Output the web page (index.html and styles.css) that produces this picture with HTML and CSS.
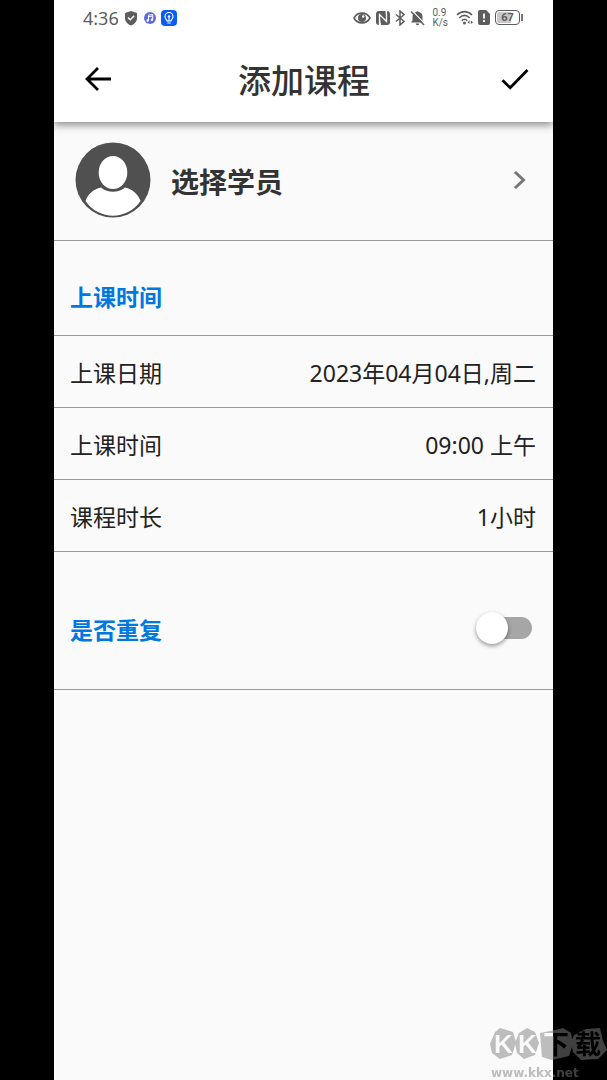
FILE: index.html
```html
<!DOCTYPE html>
<html lang="zh-CN">
<head>
<meta charset="utf-8">
<meta name="viewport" content="width=device-width, initial-scale=1">
<title>添加课程</title>
<link rel="stylesheet" href="styles.css">
</head>
<body>
<div class="screen">
  <header class="top">
    <div class="status">
      <span class="clock">4:36</span>
      <svg class="shield" width="14" height="16" viewBox="0 0 14 16"><path d="M7 1 13 3V8C13 11.500 10.500 14 7 15.500 3.500 14 1 11.500 1 8V3Z" fill="#5d5d5d"/><path d="M4 7.500 6.300 9.800 10.200 5.800" fill="none" stroke="#fff" stroke-width="1.500"/></svg>
      <svg class="music" width="12" height="12" viewBox="0 0 12 12"><circle cx="6" cy="6" r="6" fill="#5c6be0"/><path d="M4.500 8.500V3.200L8.700 2.500V7.800M4.500 4.700 8.700 4" fill="none" stroke="#fff"/><circle cx="3.700" cy="8.500" r="1.200" fill="#fff"/><circle cx="7.900" cy="7.800" r="1.200" fill="#fff"/></svg>
      <svg class="bulb" width="16" height="16" viewBox="0 0 16 16"><rect width="16" height="16" rx="4" fill="#0b5cf0"/><path d="M6 11C6 9.500 4 9 4 6.500a4 4 0 0 1 8 0C12 9 10 9.500 10 11ZM6.300 13h3.400M8 11V7.500" fill="none" stroke="#fff" stroke-width="1.100"/><circle cx="8" cy="6.500" r="1.200" fill="#fff"/></svg>
      <span class="fill"></span>
      <svg class="eye" width="18" height="14" viewBox="0 0 18 14"><path d="M1 7C4.500 .5 13.500 .5 17 7 13.500 13.500 4.500 13.500 1 7Z" fill="none" stroke="#5d5d5d" stroke-width="1.600"/><circle cx="9" cy="7" r="4" fill="#5d5d5d"/><circle cx="10.200" cy="5.500" r="1.200" fill="#fff"/></svg>
      <svg class="nfc" width="14" height="14" viewBox="0 0 14 14"><path d="M3 0H9.500L10.500 9V0H11a3 3 0 0 1 3 3V11a3 3 0 0 1-3 3H5L3.500 5V14H3a3 3 0 0 1-3-3V3A3 3 0 0 1 3 0Z" fill="#5d5d5d"/><path d="M3.500 14V3.500L10.500 10.500V0" fill="none" stroke="#fff" stroke-width="1.300"/></svg>
      <svg class="bt" width="10" height="16" viewBox="0 0 10 16"><path d="M1 4.500 9 11.300 5 15V1L9 4.700 1 11.500" fill="none" stroke="#5d5d5d" stroke-width="1.500"/></svg>
      <svg class="bell" width="15" height="16" viewBox="0 0 15 16"><path d="M1 12.500 2.500 10.500V7C2.500 4 4 2.500 6.300 2a1.300 1.300 0 0 1 2.400 0C11 2.500 12.500 4 12.500 7v3.500L14 12.500ZM5.800 13.500H9.200a1.700 1.700 0 0 1-3.400 0Z" fill="#5d5d5d"/><path d="M2 .5 15 14" stroke="#fff" stroke-width="1.100"/><path d="M1 1.500 14 15" stroke="#5d5d5d" stroke-width="1.500"/></svg>
      <span class="speed"><span>0.9</span><span>K/s</span></span>
      <svg class="wifi" width="18" height="15" viewBox="0 0 18 15"><g fill="none" stroke="#5d5d5d" stroke-width="1.600"><path d="M1 5C5.500 .5 11.500 .5 16 5M3.300 8C6.700 4.500 10.300 4.500 13.700 8M5.700 10.700C7.700 8.800 9.500 8.800 11.300 10.700"/></g><circle cx="8.500" cy="13" r="1.500" fill="#5d5d5d"/><path d="M13.500 10.500V14L11.500 12.300ZM14.800 10.500V14L17 12.300Z" fill="#5d5d5d"/></svg>
      <svg class="sim" width="12" height="15" viewBox="0 0 12 15"><path d="M2 0H8L12 4V13a2 2 0 0 1-2 2H2a2 2 0 0 1-2-2V2A2 2 0 0 1 2 0Z" fill="#5d5d5d"/><path d="M6 3.500V8.500M6 10V12" stroke="#fff" stroke-width="1.800"/></svg>
      <span class="battery"><span class="level">67</span></span>
      <span class="cap"></span>
    </div>
    <div class="bar">
      <button class="icon" type="button" aria-label="返回"><svg width="26" height="26" viewBox="0 0 26 26"><path d="M13 2 2 13 13 24M2 13H26" fill="none" stroke="#000" stroke-width="2.800"/></svg></button>
      <h1 class="title">添加课程</h1>
      <button class="icon" type="button" aria-label="完成"><svg width="28" height="22" viewBox="0 0 28 22"><path d="M1.500 12.200 9.200 19.800 26.500 2" fill="none" stroke="#000" stroke-width="2.800"/></svg></button>
    </div>
  </header>
  <main class="form">
    <button class="student" type="button">
      <svg class="avatar" width="76" height="76" viewBox="0 0 76 76"><circle cx="38" cy="38" r="37.500" fill="#505050"/><ellipse cx="38" cy="30.500" rx="14.300" ry="16.500" fill="#fff"/><path d="M10.500 59C13 52 18 47.500 26 45.500 33 51.300 43 51.300 50 45.500 58 47.500 63 52 65.500 59 52 78.500 24 78.500 10.500 59Z" fill="#fff"/></svg>
      <span class="name">选择学员</span>
      <svg width="14" height="20" viewBox="0 0 14 20"><path d="M2 2 10.500 10 2 18" fill="none" stroke="#777" stroke-width="3"/></svg>
    </button>
    <h2 class="section">上课时间</h2>
    <button class="row" type="button"><span>上课日期</span><span>2023年04月04日,周二</span></button>
    <button class="row" type="button"><span>上课时间</span><span>09:00 上午</span></button>
    <button class="row" type="button"><span>课程时长</span><span>1小时</span></button>
    <label class="repeat"><span>是否重复</span><input class="switch" type="checkbox" role="switch"></label>
  </main>
</div>
<div class="mark">
  <svg width="117" height="44" viewBox="0 -6 117 44">
    <mask id="cut" maskUnits="userSpaceOnUse" x="0" y="-6" width="117" height="44">
      <rect y="-6" width="117" height="44" fill="#fff"/>
      <text class="stone latin" x="4" y="25">K</text><text class="stone latin" x="28" y="25">K</text>
      <text class="stone" x="53" y="26">下</text><text class="stone" x="85" y="26">载</text>
    </mask>
    <path mask="url(#cut)" fill="#808080" d="M5 4 10 0 23 4 26 14 22 27 10 31 2 25 0 16ZM29 5 37 0 45 4 49 15 45 27 34 31 27 25 25 15ZM50 5 65 2 73 0 81 5 83 16 79 28 62 32 52 29ZM84 7 96 1 110 0 113 13 117 22 108 31 91 32 83 24 81 14Z"/>
  </svg>
  <span class="site">www.kkx.net</span>
</div>
</body>
</html>
```
FILE: styles.css
```css
* { box-sizing: border-box; }
body {
  margin: 0;
  min-height: 100vh;
  padding: 0 54px;
  background: #000;
  color: #222;
  font-family: "Noto Sans", "Noto Sans CJK SC", sans-serif;
  font-size: 23px;
  line-height: 32px;
}
button {
  border: 0;
  padding: 0;
  background: none;
  color: inherit;
  font: inherit;
  text-align: left;
}
svg { display: block; flex: none; }
.screen { min-height: 100vh; background: #fafafa; overflow: hidden; }
.top {
  background: #fff;
  box-shadow: 0 3px 8px rgba(0, 0, 0, .45);
}
.status {
  display: flex;
  align-items: center;
  height: 35px;
  padding: 0 30px 0 29px;
  color: #5d5d5d;
}
.clock { font: 18px/24px "Noto Sans", sans-serif; margin-right: 5px; }
.shield { margin-right: 6px; }
.music { margin-right: 5px; }
.fill { flex: 1; }
.eye, .nfc, .bt { margin-right: 5px; }
.bell { margin-right: 7px; }
.speed {
  display: flex;
  flex-direction: column;
  margin-right: 8px;
  font: 10px/10px Roboto, sans-serif;
}
.speed span { height: 10px; }
.wifi { margin-right: 4px; }
.sim { margin-right: 5px; }
.battery {
  width: 25px;
  height: 15px;
  padding: 1px;
  border: 1px solid #5d5d5d;
  border-radius: 4px;
}
.level {
  display: block;
  border-radius: 2px;
  background: linear-gradient(90deg, #c8c8c8 67%, #fff 67%);
  font: bold 11px/11px Roboto, sans-serif;
  text-align: center;
}
.cap { width: 2px; height: 7px; margin-left: 1px; background: #777; }
.bar {
  display: flex;
  align-items: center;
  justify-content: space-between;
  height: 87px;
  padding: 0 24px 0 31px;
}
.title {
  margin: 0;
  padding: 4px 4px 0 0;
  color: #333;
  font-size: 33px;
  font-weight: 500;
  line-height: 48px;
}
.student {
  display: flex;
  align-items: center;
  width: 100%;
  height: 119px;
  padding: 0 26px 2px 21px;
  border-bottom: 1px solid #999;
}
.name {
  flex: 1;
  margin-left: 20px;
  padding-top: 3px;
  color: #333;
  font-size: 28px;
  font-weight: 700;
  line-height: 40px;
}
.section, .repeat { color: #0078e0; font-size: 23px; font-weight: 700; }
.section {
  margin: 0;
  padding: 40px 17px 22px 16px;
  border-bottom: 1px solid #999;
}
.row {
  display: flex;
  align-items: center;
  justify-content: space-between;
  width: 100%;
  height: 72px;
  padding: 2px 17px 0 16px;
  border-bottom: 1px solid #999;
}
.repeat {
  display: flex;
  align-items: center;
  justify-content: space-between;
  height: 138px;
  padding: 18px 21px 0 16px;
  border-bottom: 1px solid #999;
}
.switch {
  appearance: none;
  display: flex;
  align-items: center;
  width: 52px;
  height: 22px;
  margin: 0 0 4px;
  border-radius: 11px;
  background: #a6a6a6;
}
.switch::before {
  content: "";
  width: 32px;
  height: 32px;
  margin-left: -4px;
  border-radius: 50%;
  background: #fff;
  box-shadow: 0 2px 4px rgba(0, 0, 0, .4);
}
.switch:checked { justify-content: flex-end; background: #80bcf0; }
.mark {
  position: fixed;
  right: 0;
  bottom: 0;
  opacity: .5;
  color: #808080;
}
.stone { font: bold 26px "Noto Sans CJK SC", sans-serif; }
.latin { font-family: "Liberation Sans", sans-serif; }
.site {
  display: block;
  padding-left: 1px;
  font: bold 12px/14px "DejaVu Sans", sans-serif;
}
```
